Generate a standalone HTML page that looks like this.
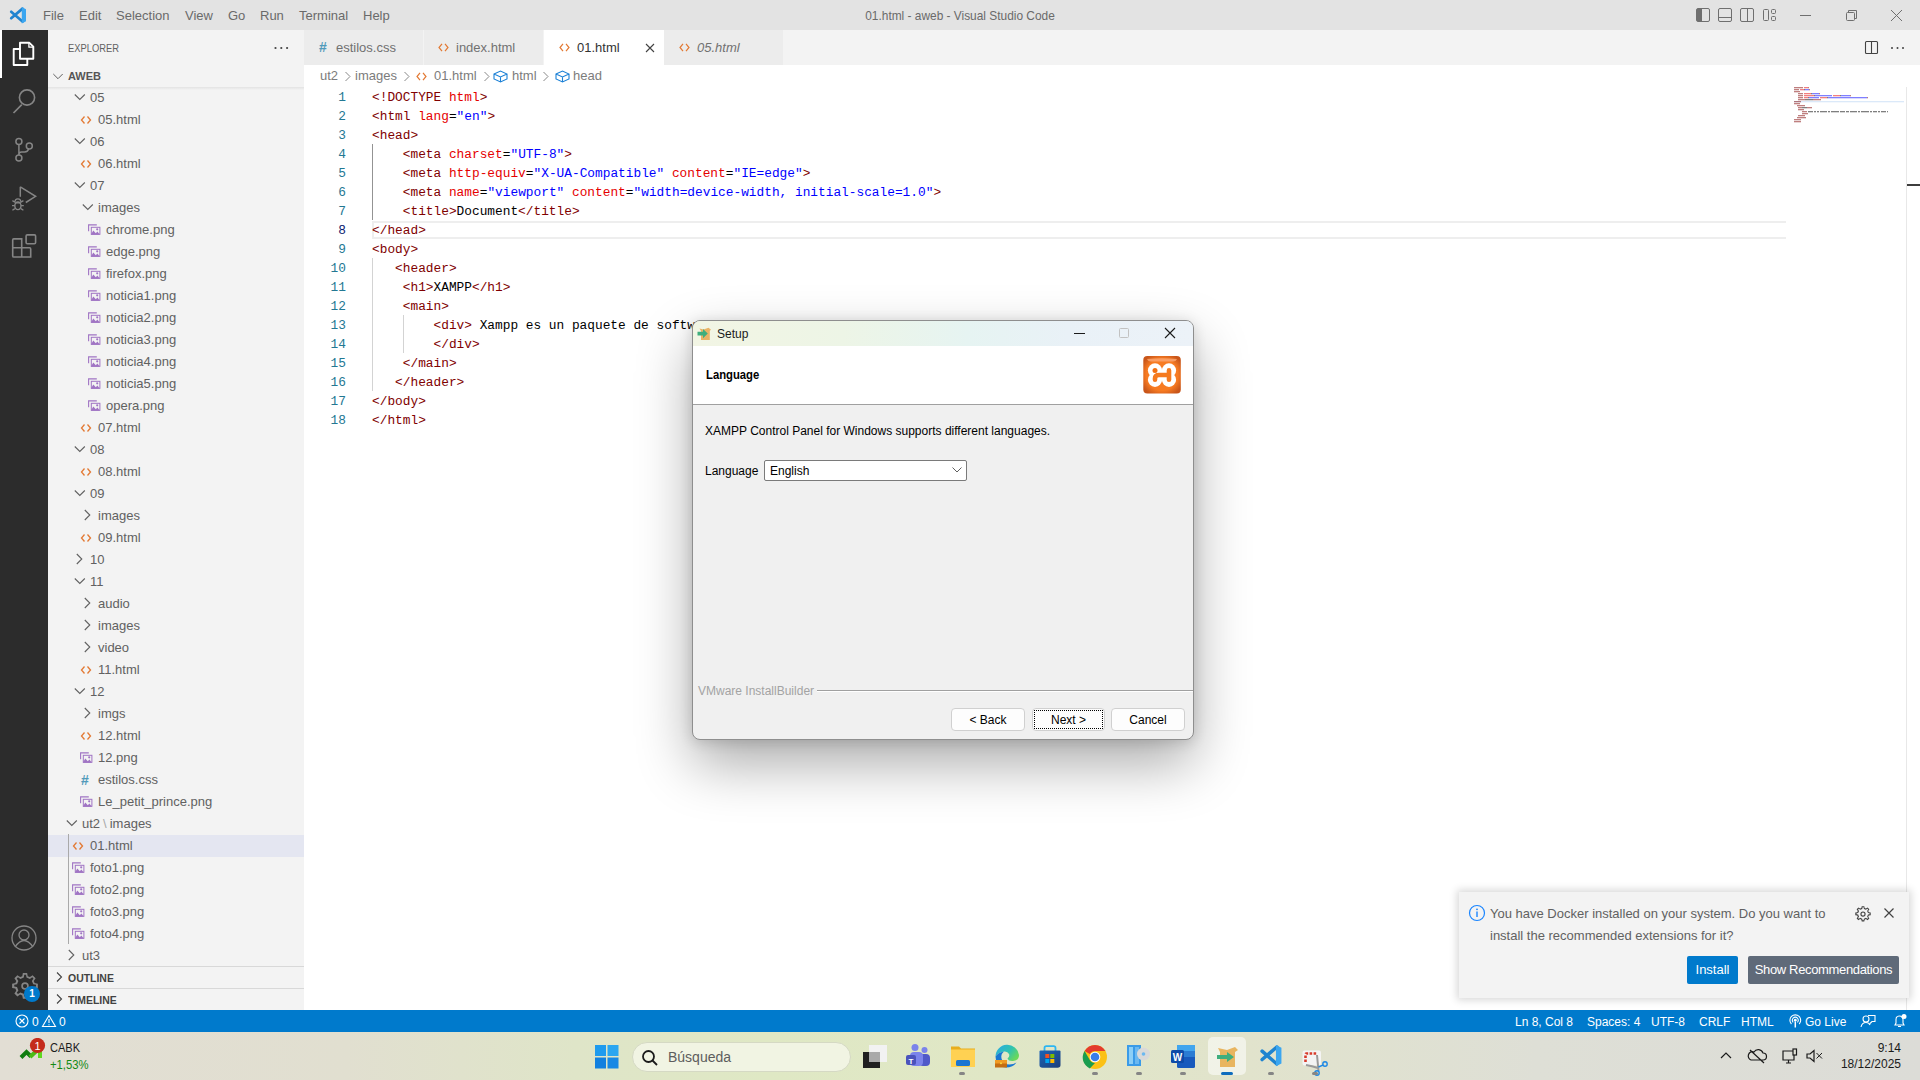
<!DOCTYPE html>
<html><head><meta charset="utf-8">
<style>
*{margin:0;padding:0;box-sizing:border-box}
html,body{width:1920px;height:1080px;overflow:hidden;background:#fff;font-family:"Liberation Sans",sans-serif;}
.a{position:absolute}
.t{position:absolute;white-space:pre}
#titlebar{left:0;top:0;width:1920px;height:30px;background:#e3e3e3}
.menu{top:1px;height:30px;line-height:30px;font-size:13px;color:#6a6a6a}
#actbar{left:0;top:30px;width:48px;height:980px;background:#2c2c2c}
#sidebar{left:48px;top:30px;width:256px;height:980px;background:#f3f3f3}
#tabs{left:304px;top:30px;width:1616px;height:35px;background:#f3f3f3}
.tab{top:0;height:35px;background:#ececec;border-right:1px solid #f3f3f3}
.tabtxt{top:0;height:35px;line-height:35px;font-size:13px;color:#717171}
#editor{left:304px;top:65px;width:1616px;height:945px;background:#fff}
#status{left:0;top:1010px;width:1920px;height:22px;background:#007acc}
.st{top:1011px;height:22px;line-height:22px;font-size:12px;color:#fff}
#taskbar{left:0;top:1032px;width:1920px;height:48px;background:linear-gradient(90deg,#e2ded4 0%,#e1dfd0 18%,#dfe5c8 30%,#dfe8c4 40%,#e0e7c6 52%,#e1e3cc 65%,#dedfd6 80%,#dcdcd7 100%)}
.row{height:22px;line-height:22px;font-size:13px;color:#616161}
.code{font-family:"Liberation Mono",monospace;font-size:12.82px;height:19px;line-height:19px;left:68px;color:#800000}
.ln{font-family:"Liberation Mono",monospace;font-size:12.82px;height:19px;line-height:19px;width:40px;left:2px;text-align:right;color:#237893}
.r{color:#e50000}.b{color:#0000ff}.k{color:#000}
</style></head><body>
<div id="titlebar" class="a">
<svg class="a" style="left:6px;top:4px" width="24" height="23" viewBox="0 0 24 23"><path d="M5.2 7.8 L16.5 17.6 M5.2 14.2 L16.5 4.6" stroke="#1f84d0" stroke-width="2.7" stroke-linecap="round" fill="none"/><path d="M15.8 3 L20 5.2 V17.2 L15.8 19.4 Z" fill="#3ba6f0"/></svg>
<div class="t menu" style="left:43px">File</div>
<div class="t menu" style="left:79px">Edit</div>
<div class="t menu" style="left:116px">Selection</div>
<div class="t menu" style="left:185px">View</div>
<div class="t menu" style="left:228px">Go</div>
<div class="t menu" style="left:260px">Run</div>
<div class="t menu" style="left:299px">Terminal</div>
<div class="t menu" style="left:363px">Help</div>
<div class="t menu" style="left:0;width:1920px;text-align:center;color:#6a6a6a;transform:scaleX(0.915);transform-origin:960px 0">01.html - aweb - Visual Studio Code</div>
<svg class="a" style="left:1690px;top:0" width="230" height="30">
<g fill="none" stroke="#6f6f6f" stroke-width="1">
<rect x="6.5" y="8.5" width="13" height="13" rx="1.5"/><rect x="7" y="9" width="5" height="12" fill="#6f6f6f" stroke="none"/>
<rect x="28.5" y="8.5" width="13" height="13" rx="1.5"/><line x1="28.5" y1="17.5" x2="41.5" y2="17.5"/>
<rect x="50.5" y="8.5" width="13" height="13" rx="1.5"/><line x1="57.5" y1="8.5" x2="57.5" y2="21.5"/>
<rect x="73.5" y="9.5" width="5" height="11" rx="1"/><rect x="81.5" y="9.5" width="4" height="4" rx="1"/><rect x="81.5" y="16.5" width="4" height="4" rx="1"/>
<line x1="110" y1="15.5" x2="121" y2="15.5"/>
<rect x="156.5" y="12.5" width="8" height="8" rx="1"/><path d="M158.5 12.5 V10.5 H166.5 V18.5 H164.5"/>
<path d="M201 10 L212 21 M212 10 L201 21"/>
</g></svg>
</div>
<div id="actbar" class="a">
<div class="a" style="left:0;top:0;width:2px;height:48px;background:#fff"></div>
<svg class="a" style="left:0;top:0" width="48" height="980" fill="none" stroke="#858585" stroke-width="1.3">
<g stroke="#fff" stroke-width="1.9" stroke-linejoin="round"><path d="M20 12.8 H29.4 L33.3 16.7 V28.8 H20 Z"/><path d="M28.9 13 V17.2 H33" stroke-width="1.3"/><path d="M20 19 H13.7 V35 H27.3 V28.8"/></g>
<circle cx="27" cy="67.5" r="7.6" stroke-width="1.6"/><path d="M13.5 83 L21.8 74.7" stroke-width="1.7"/>
<g stroke-width="1.5"><circle cx="18.9" cy="111.4" r="3"/><circle cx="18.9" cy="128.1" r="3"/><circle cx="29.3" cy="116" r="3"/><path d="M18.9 114.4 V125.1 M28.6 118.9 Q28 122 24.5 122 H21.5 Q18.9 122 18.9 124.5"/></g>
<path d="M20.3 156.8 L35.6 166.3 L25.8 172.5" stroke-width="1.5"/><path d="M20.3 156.8 V166.8" stroke-width="1.5"/><ellipse cx="17.9" cy="175.8" rx="3.1" ry="3.8" stroke-width="1.4"/><path d="M15 171.8 A2.9 2.9 0 0 1 20.8 171.8 M14.8 172.9 H21 M12.4 170.6 L14.9 172.2 M23.4 170.6 L20.9 172.2 M12 175.7 H14.7 M21.1 175.7 H23.8 M12.4 180.3 L14.9 178.6 M23.4 180.3 L20.9 178.6" stroke-width="1.3"/>
<path d="M12.7 217.8 V210 Q12.7 208.9 13.8 208.9 H21.7 V217.8 H29.6 Q30.7 217.8 30.7 218.9 V227 H13.8 Q12.7 227 12.7 225.9 V217.8 H21.7 V227" stroke-width="1.6"/><rect x="26.1" y="204.9" width="9.5" height="8.9" rx="1.2" stroke-width="1.6"/>
<circle cx="24" cy="908" r="12"/><circle cx="24" cy="905" r="5"/><path d="M15 917 Q24 904 33 917"/>
</svg>
<svg class="a" style="left:10px;top:941px" width="30" height="30" viewBox="0 0 24 24"><path fill="#858585" fill-rule="evenodd" d="M10.3 1.5h3.4l.5 2.6 1.7.7 2.2-1.5 2.4 2.4-1.5 2.2.7 1.7 2.6.5v3.4l-2.6.5-.7 1.7 1.5 2.2-2.4 2.4-2.2-1.5-1.7.7-.5 2.6h-3.4l-.5-2.6-1.7-.7-2.2 1.5-2.4-2.4 1.5-2.2-.7-1.7-2.6-.5v-3.4l2.6-.5.7-1.7-1.5-2.2 2.4-2.4 2.2 1.5 1.7-.7zM12 9a3 3 0 100 6 3 3 0 000-6zM11.4 3 l-.4 2.2-2.7 1.1-1.9-1.3-1 1 1.3 1.9-1.1 2.7-2.2.4v1.4l2.2.4 1.1 2.7-1.3 1.9 1 1 1.9-1.3 2.7 1.1.4 2.2h1.4l.4-2.2 2.7-1.1 1.9 1.3 1-1-1.3-1.9 1.1-2.7 2.2-.4v-1.4l-2.2-.4-1.1-2.7 1.3-1.9-1-1-1.9 1.3-2.7-1.1-.4-2.2zM12 10.3a1.7 1.7 0 110 3.4 1.7 1.7 0 010-3.4z"/></svg>
<div class="a" style="left:24px;top:956px;width:16px;height:16px;border-radius:8px;background:#007acc;color:#fff;font-size:10px;font-weight:bold;line-height:16px;text-align:center">1</div>
</div>
<div id="sidebar" class="a">
<div class="t" style="left:20px;top:1px;height:35px;line-height:35px;font-size:11px;color:#616161;transform:scaleX(0.85);transform-origin:0 0">EXPLORER</div>
<svg class="a" style="left:224px;top:15px" width="20" height="6"><circle cx="3.5" cy="3" r="1.1" fill="#424242"/><circle cx="9.3" cy="3" r="1.1" fill="#424242"/><circle cx="15.1" cy="3" r="1.1" fill="#424242"/></svg>
<svg class="a" style="left:4px;top:38px" width="16" height="16"><path d="M1.3 6 L6 10.7 L10.7 6" fill="none" stroke="#616161" stroke-width="1"/></svg>
<div class="t" style="left:20px;top:35px;height:22px;line-height:22px;font-size:11px;font-weight:bold;color:#555">AWEB</div>
<div class="a" style="left:0;top:57px;width:256px;height:3px;background:linear-gradient(#e2e2e2,rgba(243,243,243,0))"></div>
<svg class="a" style="left:26px;top:60px" width="16" height="16"><path d="M0.8 4.5 L5.8 9.5 L10.8 4.5" fill="none" stroke="#616161" stroke-width="1.1"/></svg>
<div class="t row" style="left:42px;top:57px">05</div>
<svg class="a" style="left:32px;top:84px" width="12" height="12"><path d="M4.5 2.5 L1.5 6 L4.5 9.5 M7.5 2.5 L10.5 6 L7.5 9.5" fill="none" stroke="#e37933" stroke-width="1.3"/></svg>
<div class="t row" style="left:50px;top:79px">05.html</div>
<svg class="a" style="left:26px;top:104px" width="16" height="16"><path d="M0.8 4.5 L5.8 9.5 L10.8 4.5" fill="none" stroke="#616161" stroke-width="1.1"/></svg>
<div class="t row" style="left:42px;top:101px">06</div>
<svg class="a" style="left:32px;top:128px" width="12" height="12"><path d="M4.5 2.5 L1.5 6 L4.5 9.5 M7.5 2.5 L10.5 6 L7.5 9.5" fill="none" stroke="#e37933" stroke-width="1.3"/></svg>
<div class="t row" style="left:50px;top:123px">06.html</div>
<svg class="a" style="left:26px;top:148px" width="16" height="16"><path d="M0.8 4.5 L5.8 9.5 L10.8 4.5" fill="none" stroke="#616161" stroke-width="1.1"/></svg>
<div class="t row" style="left:42px;top:145px">07</div>
<svg class="a" style="left:34px;top:170px" width="16" height="16"><path d="M0.8 4.5 L5.8 9.5 L10.8 4.5" fill="none" stroke="#616161" stroke-width="1.1"/></svg>
<div class="t row" style="left:50px;top:167px">images</div>
<svg class="a" style="left:40px;top:194px" width="13" height="12"><path d="M0.6 7.2 V0.9 H8.8" stroke="#a074c4" stroke-width="1.1" fill="none"/><rect x="3.3" y="3.3" width="8.6" height="7" fill="none" stroke="#a074c4" stroke-width="1"/><path d="M2.8 10.8 L5.3 6.6 L7.8 9.2 L9.4 7.6 L11.9 10.8 Z" fill="#a074c4"/><circle cx="9.2" cy="5.3" r="1.1" fill="#a074c4"/></svg>
<div class="t row" style="left:58px;top:189px">chrome.png</div>
<svg class="a" style="left:40px;top:216px" width="13" height="12"><path d="M0.6 7.2 V0.9 H8.8" stroke="#a074c4" stroke-width="1.1" fill="none"/><rect x="3.3" y="3.3" width="8.6" height="7" fill="none" stroke="#a074c4" stroke-width="1"/><path d="M2.8 10.8 L5.3 6.6 L7.8 9.2 L9.4 7.6 L11.9 10.8 Z" fill="#a074c4"/><circle cx="9.2" cy="5.3" r="1.1" fill="#a074c4"/></svg>
<div class="t row" style="left:58px;top:211px">edge.png</div>
<svg class="a" style="left:40px;top:238px" width="13" height="12"><path d="M0.6 7.2 V0.9 H8.8" stroke="#a074c4" stroke-width="1.1" fill="none"/><rect x="3.3" y="3.3" width="8.6" height="7" fill="none" stroke="#a074c4" stroke-width="1"/><path d="M2.8 10.8 L5.3 6.6 L7.8 9.2 L9.4 7.6 L11.9 10.8 Z" fill="#a074c4"/><circle cx="9.2" cy="5.3" r="1.1" fill="#a074c4"/></svg>
<div class="t row" style="left:58px;top:233px">firefox.png</div>
<svg class="a" style="left:40px;top:260px" width="13" height="12"><path d="M0.6 7.2 V0.9 H8.8" stroke="#a074c4" stroke-width="1.1" fill="none"/><rect x="3.3" y="3.3" width="8.6" height="7" fill="none" stroke="#a074c4" stroke-width="1"/><path d="M2.8 10.8 L5.3 6.6 L7.8 9.2 L9.4 7.6 L11.9 10.8 Z" fill="#a074c4"/><circle cx="9.2" cy="5.3" r="1.1" fill="#a074c4"/></svg>
<div class="t row" style="left:58px;top:255px">noticia1.png</div>
<svg class="a" style="left:40px;top:282px" width="13" height="12"><path d="M0.6 7.2 V0.9 H8.8" stroke="#a074c4" stroke-width="1.1" fill="none"/><rect x="3.3" y="3.3" width="8.6" height="7" fill="none" stroke="#a074c4" stroke-width="1"/><path d="M2.8 10.8 L5.3 6.6 L7.8 9.2 L9.4 7.6 L11.9 10.8 Z" fill="#a074c4"/><circle cx="9.2" cy="5.3" r="1.1" fill="#a074c4"/></svg>
<div class="t row" style="left:58px;top:277px">noticia2.png</div>
<svg class="a" style="left:40px;top:304px" width="13" height="12"><path d="M0.6 7.2 V0.9 H8.8" stroke="#a074c4" stroke-width="1.1" fill="none"/><rect x="3.3" y="3.3" width="8.6" height="7" fill="none" stroke="#a074c4" stroke-width="1"/><path d="M2.8 10.8 L5.3 6.6 L7.8 9.2 L9.4 7.6 L11.9 10.8 Z" fill="#a074c4"/><circle cx="9.2" cy="5.3" r="1.1" fill="#a074c4"/></svg>
<div class="t row" style="left:58px;top:299px">noticia3.png</div>
<svg class="a" style="left:40px;top:326px" width="13" height="12"><path d="M0.6 7.2 V0.9 H8.8" stroke="#a074c4" stroke-width="1.1" fill="none"/><rect x="3.3" y="3.3" width="8.6" height="7" fill="none" stroke="#a074c4" stroke-width="1"/><path d="M2.8 10.8 L5.3 6.6 L7.8 9.2 L9.4 7.6 L11.9 10.8 Z" fill="#a074c4"/><circle cx="9.2" cy="5.3" r="1.1" fill="#a074c4"/></svg>
<div class="t row" style="left:58px;top:321px">noticia4.png</div>
<svg class="a" style="left:40px;top:348px" width="13" height="12"><path d="M0.6 7.2 V0.9 H8.8" stroke="#a074c4" stroke-width="1.1" fill="none"/><rect x="3.3" y="3.3" width="8.6" height="7" fill="none" stroke="#a074c4" stroke-width="1"/><path d="M2.8 10.8 L5.3 6.6 L7.8 9.2 L9.4 7.6 L11.9 10.8 Z" fill="#a074c4"/><circle cx="9.2" cy="5.3" r="1.1" fill="#a074c4"/></svg>
<div class="t row" style="left:58px;top:343px">noticia5.png</div>
<svg class="a" style="left:40px;top:370px" width="13" height="12"><path d="M0.6 7.2 V0.9 H8.8" stroke="#a074c4" stroke-width="1.1" fill="none"/><rect x="3.3" y="3.3" width="8.6" height="7" fill="none" stroke="#a074c4" stroke-width="1"/><path d="M2.8 10.8 L5.3 6.6 L7.8 9.2 L9.4 7.6 L11.9 10.8 Z" fill="#a074c4"/><circle cx="9.2" cy="5.3" r="1.1" fill="#a074c4"/></svg>
<div class="t row" style="left:58px;top:365px">opera.png</div>
<svg class="a" style="left:32px;top:392px" width="12" height="12"><path d="M4.5 2.5 L1.5 6 L4.5 9.5 M7.5 2.5 L10.5 6 L7.5 9.5" fill="none" stroke="#e37933" stroke-width="1.3"/></svg>
<div class="t row" style="left:50px;top:387px">07.html</div>
<svg class="a" style="left:26px;top:412px" width="16" height="16"><path d="M0.8 4.5 L5.8 9.5 L10.8 4.5" fill="none" stroke="#616161" stroke-width="1.1"/></svg>
<div class="t row" style="left:42px;top:409px">08</div>
<svg class="a" style="left:32px;top:436px" width="12" height="12"><path d="M4.5 2.5 L1.5 6 L4.5 9.5 M7.5 2.5 L10.5 6 L7.5 9.5" fill="none" stroke="#e37933" stroke-width="1.3"/></svg>
<div class="t row" style="left:50px;top:431px">08.html</div>
<svg class="a" style="left:26px;top:456px" width="16" height="16"><path d="M0.8 4.5 L5.8 9.5 L10.8 4.5" fill="none" stroke="#616161" stroke-width="1.1"/></svg>
<div class="t row" style="left:42px;top:453px">09</div>
<svg class="a" style="left:34px;top:478px" width="16" height="16"><path d="M2.8 2 L7.8 7 L2.8 12" fill="none" stroke="#616161" stroke-width="1.1"/></svg>
<div class="t row" style="left:50px;top:475px">images</div>
<svg class="a" style="left:32px;top:502px" width="12" height="12"><path d="M4.5 2.5 L1.5 6 L4.5 9.5 M7.5 2.5 L10.5 6 L7.5 9.5" fill="none" stroke="#e37933" stroke-width="1.3"/></svg>
<div class="t row" style="left:50px;top:497px">09.html</div>
<svg class="a" style="left:26px;top:522px" width="16" height="16"><path d="M2.8 2 L7.8 7 L2.8 12" fill="none" stroke="#616161" stroke-width="1.1"/></svg>
<div class="t row" style="left:42px;top:519px">10</div>
<svg class="a" style="left:26px;top:544px" width="16" height="16"><path d="M0.8 4.5 L5.8 9.5 L10.8 4.5" fill="none" stroke="#616161" stroke-width="1.1"/></svg>
<div class="t row" style="left:42px;top:541px">11</div>
<svg class="a" style="left:34px;top:566px" width="16" height="16"><path d="M2.8 2 L7.8 7 L2.8 12" fill="none" stroke="#616161" stroke-width="1.1"/></svg>
<div class="t row" style="left:50px;top:563px">audio</div>
<svg class="a" style="left:34px;top:588px" width="16" height="16"><path d="M2.8 2 L7.8 7 L2.8 12" fill="none" stroke="#616161" stroke-width="1.1"/></svg>
<div class="t row" style="left:50px;top:585px">images</div>
<svg class="a" style="left:34px;top:610px" width="16" height="16"><path d="M2.8 2 L7.8 7 L2.8 12" fill="none" stroke="#616161" stroke-width="1.1"/></svg>
<div class="t row" style="left:50px;top:607px">video</div>
<svg class="a" style="left:32px;top:634px" width="12" height="12"><path d="M4.5 2.5 L1.5 6 L4.5 9.5 M7.5 2.5 L10.5 6 L7.5 9.5" fill="none" stroke="#e37933" stroke-width="1.3"/></svg>
<div class="t row" style="left:50px;top:629px">11.html</div>
<svg class="a" style="left:26px;top:654px" width="16" height="16"><path d="M0.8 4.5 L5.8 9.5 L10.8 4.5" fill="none" stroke="#616161" stroke-width="1.1"/></svg>
<div class="t row" style="left:42px;top:651px">12</div>
<svg class="a" style="left:34px;top:676px" width="16" height="16"><path d="M2.8 2 L7.8 7 L2.8 12" fill="none" stroke="#616161" stroke-width="1.1"/></svg>
<div class="t row" style="left:50px;top:673px">imgs</div>
<svg class="a" style="left:32px;top:700px" width="12" height="12"><path d="M4.5 2.5 L1.5 6 L4.5 9.5 M7.5 2.5 L10.5 6 L7.5 9.5" fill="none" stroke="#e37933" stroke-width="1.3"/></svg>
<div class="t row" style="left:50px;top:695px">12.html</div>
<svg class="a" style="left:32px;top:722px" width="13" height="12"><path d="M0.6 7.2 V0.9 H8.8" stroke="#a074c4" stroke-width="1.1" fill="none"/><rect x="3.3" y="3.3" width="8.6" height="7" fill="none" stroke="#a074c4" stroke-width="1"/><path d="M2.8 10.8 L5.3 6.6 L7.8 9.2 L9.4 7.6 L11.9 10.8 Z" fill="#a074c4"/><circle cx="9.2" cy="5.3" r="1.1" fill="#a074c4"/></svg>
<div class="t row" style="left:50px;top:717px">12.png</div>
<div class="t" style="left:33px;top:739px;height:22px;line-height:22px;font-size:14px;font-weight:bold;color:#519aba">#</div>
<div class="t row" style="left:50px;top:739px">estilos.css</div>
<svg class="a" style="left:32px;top:766px" width="13" height="12"><path d="M0.6 7.2 V0.9 H8.8" stroke="#a074c4" stroke-width="1.1" fill="none"/><rect x="3.3" y="3.3" width="8.6" height="7" fill="none" stroke="#a074c4" stroke-width="1"/><path d="M2.8 10.8 L5.3 6.6 L7.8 9.2 L9.4 7.6 L11.9 10.8 Z" fill="#a074c4"/><circle cx="9.2" cy="5.3" r="1.1" fill="#a074c4"/></svg>
<div class="t row" style="left:50px;top:761px">Le_petit_prince.png</div>
<svg class="a" style="left:18px;top:786px" width="16" height="16"><path d="M0.8 4.5 L5.8 9.5 L10.8 4.5" fill="none" stroke="#616161" stroke-width="1.1"/></svg>
<div class="t row" style="left:34px;top:783px">ut2<span style="color:#a8a8a8;padding:0 3px">\</span>images</div>
<div class="a" style="left:0;top:805px;width:256px;height:22px;background:#e4e6f1"></div>
<svg class="a" style="left:24px;top:810px" width="12" height="12"><path d="M4.5 2.5 L1.5 6 L4.5 9.5 M7.5 2.5 L10.5 6 L7.5 9.5" fill="none" stroke="#e37933" stroke-width="1.3"/></svg>
<div class="t row" style="left:42px;top:805px">01.html</div>
<svg class="a" style="left:24px;top:832px" width="13" height="12"><path d="M0.6 7.2 V0.9 H8.8" stroke="#a074c4" stroke-width="1.1" fill="none"/><rect x="3.3" y="3.3" width="8.6" height="7" fill="none" stroke="#a074c4" stroke-width="1"/><path d="M2.8 10.8 L5.3 6.6 L7.8 9.2 L9.4 7.6 L11.9 10.8 Z" fill="#a074c4"/><circle cx="9.2" cy="5.3" r="1.1" fill="#a074c4"/></svg>
<div class="t row" style="left:42px;top:827px">foto1.png</div>
<svg class="a" style="left:24px;top:854px" width="13" height="12"><path d="M0.6 7.2 V0.9 H8.8" stroke="#a074c4" stroke-width="1.1" fill="none"/><rect x="3.3" y="3.3" width="8.6" height="7" fill="none" stroke="#a074c4" stroke-width="1"/><path d="M2.8 10.8 L5.3 6.6 L7.8 9.2 L9.4 7.6 L11.9 10.8 Z" fill="#a074c4"/><circle cx="9.2" cy="5.3" r="1.1" fill="#a074c4"/></svg>
<div class="t row" style="left:42px;top:849px">foto2.png</div>
<svg class="a" style="left:24px;top:876px" width="13" height="12"><path d="M0.6 7.2 V0.9 H8.8" stroke="#a074c4" stroke-width="1.1" fill="none"/><rect x="3.3" y="3.3" width="8.6" height="7" fill="none" stroke="#a074c4" stroke-width="1"/><path d="M2.8 10.8 L5.3 6.6 L7.8 9.2 L9.4 7.6 L11.9 10.8 Z" fill="#a074c4"/><circle cx="9.2" cy="5.3" r="1.1" fill="#a074c4"/></svg>
<div class="t row" style="left:42px;top:871px">foto3.png</div>
<svg class="a" style="left:24px;top:898px" width="13" height="12"><path d="M0.6 7.2 V0.9 H8.8" stroke="#a074c4" stroke-width="1.1" fill="none"/><rect x="3.3" y="3.3" width="8.6" height="7" fill="none" stroke="#a074c4" stroke-width="1"/><path d="M2.8 10.8 L5.3 6.6 L7.8 9.2 L9.4 7.6 L11.9 10.8 Z" fill="#a074c4"/><circle cx="9.2" cy="5.3" r="1.1" fill="#a074c4"/></svg>
<div class="t row" style="left:42px;top:893px">foto4.png</div>
<svg class="a" style="left:18px;top:918px" width="16" height="16"><path d="M2.8 2 L7.8 7 L2.8 12" fill="none" stroke="#616161" stroke-width="1.1"/></svg>
<div class="t row" style="left:34px;top:915px">ut3</div>
<div class="a" style="left:20px;top:804px;width:1px;height:110px;background:#a9a9a9"></div>
<div class="a" style="left:0;top:936px;width:256px;height:1px;background:#d8d8d8"></div>
<svg class="a" style="left:4px;top:939px" width="16" height="16"><path d="M5 3.5 L9.5 8 L5 12.5" fill="none" stroke="#424242" stroke-width="1.1"/></svg>
<div class="t" style="left:20px;top:937px;height:22px;line-height:22px;font-size:11px;font-weight:bold;color:#424242;transform:scaleX(0.95);transform-origin:0 0">OUTLINE</div>
<div class="a" style="left:0;top:958px;width:256px;height:1px;background:#d8d8d8"></div>
<svg class="a" style="left:4px;top:961px" width="16" height="16"><path d="M5 3.5 L9.5 8 L5 12.5" fill="none" stroke="#424242" stroke-width="1.1"/></svg>
<div class="t" style="left:20px;top:959px;height:22px;line-height:22px;font-size:11px;font-weight:bold;color:#424242;transform:scaleX(0.95);transform-origin:0 0">TIMELINE</div>
</div>
<div id="tabs" class="a">
<div class="a tab" style="left:0;width:120px"></div>
<div class="a" style="left:15px;top:0;height:35px;line-height:35px;font-size:14px;font-weight:bold;color:#519aba">#</div>
<div class="t tabtxt" style="left:32px">estilos.css</div>
<div class="a tab" style="left:120px;width:120px"></div>
<svg class="a" style="left:134px;top:13px" width="11" height="9"><path d="M4 0.8 L1 4.5 L4 8.2 M7 0.8 L10 4.5 L7 8.2" fill="none" stroke="#e37933" stroke-width="1.2"/></svg>
<div class="t tabtxt" style="left:152px">index.html</div>
<div class="a" style="left:240px;top:0;width:120px;height:35px;background:#fff"></div>
<svg class="a" style="left:255px;top:13px" width="11" height="9"><path d="M4 0.8 L1 4.5 L4 8.2 M7 0.8 L10 4.5 L7 8.2" fill="none" stroke="#e37933" stroke-width="1.2"/></svg>
<div class="t tabtxt" style="left:273px;color:#333">01.html</div>
<svg class="a" style="left:341px;top:13px" width="10" height="10"><path d="M1 1 L9 9 M9 1 L1 9" stroke="#424242" stroke-width="1.1"/></svg>
<div class="a tab" style="left:360px;width:120px"></div>
<svg class="a" style="left:375px;top:13px" width="11" height="9"><path d="M4 0.8 L1 4.5 L4 8.2 M7 0.8 L10 4.5 L7 8.2" fill="none" stroke="#e37933" stroke-width="1.2"/></svg>
<div class="t tabtxt" style="left:393px;font-style:italic">05.html</div>
<svg class="a" style="left:1558px;top:8px" width="60" height="20" fill="none" stroke="#424242" stroke-width="1.1">
<rect x="3.5" y="3.5" width="12" height="12" rx="1"/><line x1="9.5" y1="3.5" x2="9.5" y2="15.5"/>
<circle cx="30" cy="10" r="1" fill="#424242" stroke="none"/><circle cx="35.5" cy="10" r="1" fill="#424242" stroke="none"/><circle cx="41" cy="10" r="1" fill="#424242" stroke="none"/>
</svg>
</div>
<div id="editor" class="a">
<div class="t" style="left:16px;top:0;height:22px;line-height:22px;font-size:13px;color:#7c7c7c">ut2</div>
<svg class="a" style="left:40px;top:6px" width="8" height="11"><path d="M1.5 1 L6 5.5 L1.5 10" fill="none" stroke="#888" stroke-width="1"/></svg>
<div class="t" style="left:51px;top:0;height:22px;line-height:22px;font-size:13px;color:#7c7c7c">images</div>
<svg class="a" style="left:99px;top:6px" width="8" height="11"><path d="M1.5 1 L6 5.5 L1.5 10" fill="none" stroke="#888" stroke-width="1"/></svg>
<svg class="a" style="left:112px;top:7px" width="11" height="9"><path d="M4 0.8 L1 4.5 L4 8.2 M7 0.8 L10 4.5 L7 8.2" fill="none" stroke="#e37933" stroke-width="1.2"/></svg>
<div class="t" style="left:130px;top:0;height:22px;line-height:22px;font-size:13px;color:#7c7c7c">01.html</div>
<svg class="a" style="left:179px;top:6px" width="8" height="11"><path d="M1.5 1 L6 5.5 L1.5 10" fill="none" stroke="#888" stroke-width="1"/></svg>
<svg class="a" style="left:189px;top:5px" width="15" height="13"><path d="M1 4 L7.5 1 L14 4 V9 L7.5 12 L1 9 Z M1 4 L7.5 7 L14 4 M7.5 7 V12" fill="none" stroke="#1b80d6" stroke-width="1.1"/></svg>
<div class="t" style="left:208px;top:0;height:22px;line-height:22px;font-size:13px;color:#7c7c7c">html</div>
<svg class="a" style="left:238px;top:6px" width="8" height="11"><path d="M1.5 1 L6 5.5 L1.5 10" fill="none" stroke="#888" stroke-width="1"/></svg>
<svg class="a" style="left:251px;top:5px" width="15" height="13"><path d="M1 4 L7.5 1 L14 4 V9 L7.5 12 L1 9 Z M1 4 L7.5 7 L14 4 M7.5 7 V12" fill="none" stroke="#1b80d6" stroke-width="1.1"/></svg>
<div class="t" style="left:269px;top:0;height:22px;line-height:22px;font-size:13px;color:#7c7c7c">head</div>

<div class="a" style="left:68px;top:79px;width:1px;height:76px;background:#939393"></div>
<div class="a" style="left:68px;top:156px;width:1414px;height:18px;border:2px solid #eeeeee;border-right:none"></div>
<div class="a" style="left:68px;top:193px;width:1px;height:133px;background:#d3d3d3"></div>
<div class="a" style="left:99px;top:250px;width:1px;height:38px;background:#d3d3d3"></div>
<svg class="a" style="left:1490px;top:22px" width="110" height="40"><rect x="-4" y="14" width="116" height="1.3" fill="#dbe9f9"/><rect x="0" y="0" width="9" height="1.3" fill="#800000" opacity="0.5"/><rect x="10" y="0" width="4" height="1.3" fill="#e50000" opacity="0.5"/><rect x="14" y="0" width="1" height="1.3" fill="#800000" opacity="0.5"/><rect x="0" y="2" width="5" height="1.3" fill="#800000" opacity="0.5"/><rect x="6" y="2" width="4" height="1.3" fill="#e50000" opacity="0.5"/><rect x="10" y="2" width="1" height="1.3" fill="#000" opacity="0.5"/><rect x="11" y="2" width="4" height="1.3" fill="#0000ff" opacity="0.5"/><rect x="15" y="2" width="1" height="1.3" fill="#800000" opacity="0.5"/><rect x="0" y="4" width="6" height="1.3" fill="#800000" opacity="0.5"/><rect x="4" y="6" width="5" height="1.3" fill="#800000" opacity="0.5"/><rect x="10" y="6" width="7" height="1.3" fill="#e50000" opacity="0.5"/><rect x="17" y="6" width="1" height="1.3" fill="#000" opacity="0.5"/><rect x="18" y="6" width="7" height="1.3" fill="#0000ff" opacity="0.5"/><rect x="25" y="6" width="1" height="1.3" fill="#800000" opacity="0.5"/><rect x="4" y="8" width="5" height="1.3" fill="#800000" opacity="0.5"/><rect x="10" y="8" width="10" height="1.3" fill="#e50000" opacity="0.5"/><rect x="20" y="8" width="1" height="1.3" fill="#000" opacity="0.5"/><rect x="21" y="8" width="17" height="1.3" fill="#0000ff" opacity="0.5"/><rect x="39" y="8" width="7" height="1.3" fill="#e50000" opacity="0.5"/><rect x="46" y="8" width="1" height="1.3" fill="#000" opacity="0.5"/><rect x="47" y="8" width="9" height="1.3" fill="#0000ff" opacity="0.5"/><rect x="56" y="8" width="1" height="1.3" fill="#800000" opacity="0.5"/><rect x="4" y="10" width="5" height="1.3" fill="#800000" opacity="0.5"/><rect x="10" y="10" width="4" height="1.3" fill="#e50000" opacity="0.5"/><rect x="14" y="10" width="1" height="1.3" fill="#000" opacity="0.5"/><rect x="15" y="10" width="10" height="1.3" fill="#0000ff" opacity="0.5"/><rect x="26" y="10" width="7" height="1.3" fill="#e50000" opacity="0.5"/><rect x="33" y="10" width="1" height="1.3" fill="#000" opacity="0.5"/><rect x="34" y="10" width="39" height="1.3" fill="#0000ff" opacity="0.5"/><rect x="73" y="10" width="1" height="1.3" fill="#800000" opacity="0.5"/><rect x="4" y="12" width="7" height="1.3" fill="#800000" opacity="0.5"/><rect x="11" y="12" width="8" height="1.3" fill="#000" opacity="0.5"/><rect x="19" y="12" width="8" height="1.3" fill="#800000" opacity="0.5"/><rect x="0" y="14" width="7" height="1.3" fill="#800000" opacity="0.5"/><rect x="0" y="16" width="6" height="1.3" fill="#800000" opacity="0.5"/><rect x="3" y="18" width="8" height="1.3" fill="#800000" opacity="0.5"/><rect x="4" y="20" width="4" height="1.3" fill="#800000" opacity="0.5"/><rect x="8" y="20" width="5" height="1.3" fill="#000" opacity="0.5"/><rect x="13" y="20" width="5" height="1.3" fill="#800000" opacity="0.5"/><rect x="4" y="22" width="6" height="1.3" fill="#800000" opacity="0.5"/><rect x="8" y="24" width="5" height="1.3" fill="#800000" opacity="0.5"/><rect x="14" y="24" width="5" height="1.3" fill="#000" opacity="0.5"/><rect x="20" y="24" width="2" height="1.3" fill="#000" opacity="0.5"/><rect x="23" y="24" width="2" height="1.3" fill="#000" opacity="0.5"/><rect x="26" y="24" width="7" height="1.3" fill="#000" opacity="0.5"/><rect x="34" y="24" width="2" height="1.3" fill="#000" opacity="0.5"/><rect x="37" y="24" width="8" height="1.3" fill="#000" opacity="0.5"/><rect x="46" y="24" width="5" height="1.3" fill="#000" opacity="0.5"/><rect x="52" y="24" width="3" height="1.3" fill="#000" opacity="0.5"/><rect x="56" y="24" width="7" height="1.3" fill="#000" opacity="0.5"/><rect x="64" y="24" width="2" height="1.3" fill="#000" opacity="0.5"/><rect x="67" y="24" width="8" height="1.3" fill="#000" opacity="0.5"/><rect x="76" y="24" width="2" height="1.3" fill="#000" opacity="0.5"/><rect x="79" y="24" width="4" height="1.3" fill="#000" opacity="0.5"/><rect x="84" y="24" width="2" height="1.3" fill="#000" opacity="0.5"/><rect x="87" y="24" width="5" height="1.3" fill="#000" opacity="0.5"/><rect x="93" y="24" width="1" height="1.3" fill="#000" opacity="0.5"/><rect x="8" y="26" width="6" height="1.3" fill="#800000" opacity="0.5"/><rect x="4" y="28" width="7" height="1.3" fill="#800000" opacity="0.5"/><rect x="3" y="30" width="9" height="1.3" fill="#800000" opacity="0.5"/><rect x="0" y="32" width="7" height="1.3" fill="#800000" opacity="0.5"/><rect x="0" y="34" width="7" height="1.3" fill="#800000" opacity="0.5"/></svg>
<div class="a" style="left:1602px;top:22px;width:1px;height:923px;background:#e8e8e8"></div>
<div class="a" style="left:1603px;top:119px;width:13px;height:2px;background:#3d3d3d"></div>
<div class="t code" style="top:23px">&lt;!DOCTYPE <span class="r">html</span>&gt;</div>
<div class="t ln" style="top:23px;color:#237893">1</div>
<div class="t code" style="top:42px">&lt;html <span class="r">lang</span><span class="k">=</span><span class="b">&quot;en&quot;</span>&gt;</div>
<div class="t ln" style="top:42px;color:#237893">2</div>
<div class="t code" style="top:61px">&lt;head&gt;</div>
<div class="t ln" style="top:61px;color:#237893">3</div>
<div class="t code" style="top:80px"><span class="k">    </span>&lt;meta <span class="r">charset</span><span class="k">=</span><span class="b">&quot;UTF-8&quot;</span>&gt;</div>
<div class="t ln" style="top:80px;color:#237893">4</div>
<div class="t code" style="top:99px"><span class="k">    </span>&lt;meta <span class="r">http-equiv</span><span class="k">=</span><span class="b">&quot;X-UA-Compatible&quot;</span><span class="k"> </span><span class="r">content</span><span class="k">=</span><span class="b">&quot;IE=edge&quot;</span>&gt;</div>
<div class="t ln" style="top:99px;color:#237893">5</div>
<div class="t code" style="top:118px"><span class="k">    </span>&lt;meta <span class="r">name</span><span class="k">=</span><span class="b">&quot;viewport&quot;</span><span class="k"> </span><span class="r">content</span><span class="k">=</span><span class="b">&quot;width=device-width, initial-scale=1.0&quot;</span>&gt;</div>
<div class="t ln" style="top:118px;color:#237893">6</div>
<div class="t code" style="top:137px"><span class="k">    </span>&lt;title&gt;<span class="k">Document</span>&lt;/title&gt;</div>
<div class="t ln" style="top:137px;color:#237893">7</div>
<div class="t code" style="top:156px">&lt;/head&gt;</div>
<div class="t ln" style="top:156px;color:#0b216f">8</div>
<div class="t code" style="top:175px">&lt;body&gt;</div>
<div class="t ln" style="top:175px;color:#237893">9</div>
<div class="t code" style="top:194px"><span class="k">   </span>&lt;header&gt;</div>
<div class="t ln" style="top:194px;color:#237893">10</div>
<div class="t code" style="top:213px"><span class="k">    </span>&lt;h1&gt;<span class="k">XAMPP</span>&lt;/h1&gt;</div>
<div class="t ln" style="top:213px;color:#237893">11</div>
<div class="t code" style="top:232px"><span class="k">    </span>&lt;main&gt;</div>
<div class="t ln" style="top:232px;color:#237893">12</div>
<div class="t code" style="top:251px"><span class="k">        </span>&lt;div&gt;<span class="k"> Xampp es un paquete de software libre que instala un servidor de base de datos M</span></div>
<div class="t ln" style="top:251px;color:#237893">13</div>
<div class="t code" style="top:270px"><span class="k">        </span>&lt;/div&gt;</div>
<div class="t ln" style="top:270px;color:#237893">14</div>
<div class="t code" style="top:289px"><span class="k">    </span>&lt;/main&gt;</div>
<div class="t ln" style="top:289px;color:#237893">15</div>
<div class="t code" style="top:308px"><span class="k">   </span>&lt;/header&gt;</div>
<div class="t ln" style="top:308px;color:#237893">16</div>
<div class="t code" style="top:327px">&lt;/body&gt;</div>
<div class="t ln" style="top:327px;color:#237893">17</div>
<div class="t code" style="top:346px">&lt;/html&gt;</div>
<div class="t ln" style="top:346px;color:#237893">18</div>
</div>
<div id="status" class="a">
<svg class="a" style="left:15px;top:4px" width="60" height="14" fill="none" stroke="#fff" stroke-width="1.1">
<circle cx="7" cy="7" r="6"/><path d="M4.5 4.5 L9.5 9.5 M9.5 4.5 L4.5 9.5"/>
<path d="M34 1.5 L40.5 12.5 H27.5 Z M34 5 V9 M34 10.3 V11.2"/>
</svg>
<div class="t" style="left:32px;top:1px;height:22px;line-height:22px;font-size:12px;color:#fff">0</div>
<div class="t" style="left:59px;top:1px;height:22px;line-height:22px;font-size:12px;color:#fff">0</div>
<div class="t" style="left:1515px;top:1px;height:22px;line-height:22px;font-size:12px;color:#fff">Ln 8, Col 8</div>
<div class="t" style="left:1587px;top:1px;height:22px;line-height:22px;font-size:12px;color:#fff">Spaces: 4</div>
<div class="t" style="left:1651px;top:1px;height:22px;line-height:22px;font-size:12px;color:#fff">UTF-8</div>
<div class="t" style="left:1699px;top:1px;height:22px;line-height:22px;font-size:12px;color:#fff">CRLF</div>
<div class="t" style="left:1741px;top:1px;height:22px;line-height:22px;font-size:12px;color:#fff">HTML</div>
<svg class="a" style="left:1789px;top:4px" width="14" height="15" fill="none" stroke="#fff" stroke-width="1.1"><circle cx="6.3" cy="6.2" r="1.4" fill="#fff" stroke="none"/><path d="M2.4 10 A5.4 5.4 0 1 1 10.2 10 M4.2 8.3 A3 3 0 1 1 8.4 8.3"/><path d="M6.3 7.5 V13.5" stroke-width="1.5"/></svg>
<div class="t" style="left:1805px;top:1px;height:22px;line-height:22px;font-size:12px;color:#fff">Go Live</div>
<svg class="a" style="left:1860px;top:4px" width="16" height="14" fill="none" stroke="#fff" stroke-width="1.1"><circle cx="6" cy="5" r="3"/><path d="M1 13 Q2 8.5 6 8.5 Q9 8.5 10 11 M8 1.5 H15 V7.5 H12 L10 9.5"/></svg>
<svg class="a" style="left:1892px;top:3px" width="16" height="16" fill="none" stroke="#fff" stroke-width="1.1"><path d="M3 12 H12 L11 10 V6.5 A3.5 3.5 0 0 0 4 6.5 V10 Z M6 13.5 H9"/><circle cx="12" cy="3.5" r="2.5" fill="#fff" stroke="none"/></svg>
</div>
<div id="taskbar" class="a">
<svg class="a" style="left:18px;top:6px" width="76" height="36">
<path d="M3 19.5 L8.5 14 L13 18.5" fill="none" stroke="#107c10" stroke-width="4"/>
<path d="M12 19 L19 12.5" fill="none" stroke="#4cbb17" stroke-width="4"/>
<rect x="20" y="11" width="4" height="9" fill="#5fd81f"/>
<circle cx="19.5" cy="7.5" r="7.6" fill="#c42b1c"/>
<text x="19.5" y="11.5" font-size="11" fill="#fff" text-anchor="middle" font-family="Liberation Sans">1</text>
</svg>
<div class="t" style="left:50px;top:9px;font-size:12px;line-height:15px;color:#1b1b1b;transform:scaleX(0.92);transform-origin:0 0">CABK</div>
<div class="t" style="left:50px;top:26px;font-size:12px;line-height:15px;color:#138a13;transform:scaleX(0.94);transform-origin:0 0">+1,53%</div>

<svg class="a" style="left:595px;top:13px" width="24" height="24"><rect x="0" y="0" width="11" height="11" fill="#1e9bee"/><rect x="12.5" y="0" width="11" height="11" fill="#2aa6f0"/><rect x="0" y="12.5" width="11" height="11" fill="#1180df"/><rect x="12.5" y="12.5" width="11" height="11" fill="#1788e4"/></svg>
<div class="a" style="left:632px;top:10px;width:219px;height:30px;border-radius:15px;background:#f1f4e3;border:1px solid #d5d9c4"></div>
<svg class="a" style="left:641px;top:17px" width="18" height="18" fill="none" stroke="#1b1b1b" stroke-width="1.8"><circle cx="7.5" cy="7.5" r="5.5"/><path d="M11.5 11.5 L16 16"/></svg>
<div class="t" style="left:668px;top:10px;height:30px;line-height:30px;font-size:14px;color:#5d5d5d">Búsqueda</div>

<svg class="a" style="left:862px;top:12px" width="26" height="26"><rect x="1" y="8" width="17" height="16" fill="#202020"/><rect x="7" y="1" width="18" height="17" fill="#f2f2f2"/><rect x="7" y="8" width="11" height="10" fill="#a9a9a9"/></svg>
<svg class="a" style="left:905px;top:11px" width="26" height="26"><circle cx="10" cy="4.5" r="3.5" fill="#7b83eb"/><circle cx="19.5" cy="7" r="3" fill="#7b83eb"/><rect x="14" y="11" width="11" height="12" rx="4" fill="#5059c9"/><rect x="5" y="9" width="13" height="14" rx="4" fill="#7b83eb"/><rect x="1" y="12" width="10" height="10" rx="2" fill="#4b53bc"/><text x="6" y="20.5" font-size="8" font-weight="bold" fill="#fff" text-anchor="middle" font-family="Liberation Sans">T</text></svg>
<svg class="a" style="left:950px;top:13px" width="26" height="24"><path d="M1 1.5 H9 L11 3.5 H25 V22 H1 Z" fill="#e8ae1d"/><rect x="1" y="4.5" width="24" height="17.5" fill="#ffd152"/><rect x="6" y="15" width="14" height="6" rx="1.5" fill="#1b76d2"/></svg>
<svg class="a" style="left:994px;top:11px" width="26" height="26"><defs><linearGradient id="eg" x1="0" y1="0" x2="1" y2="0.6"><stop offset="0" stop-color="#2aa9e8"/><stop offset="0.6" stop-color="#2fc3b0"/><stop offset="1" stop-color="#6ad85a"/></linearGradient></defs>
<path d="M1.5 13.5 A11.8 11.8 0 0 1 25 12 Q25 17.5 19 18 Q14.5 18.3 13.5 15.5 Q16 13.5 15 11 Q13.5 8 10 8.5 Q4 9.5 1.5 13.5 Z" fill="url(#eg)"/>
<path d="M1.5 13.5 Q4 9.5 10 8.5 Q6.5 11 7.5 15.5 Q9 21.5 15.5 21.5 Q19.5 21.5 22.5 19.5 Q19 24.5 12 24.5 Q1.5 24 1.5 13.5Z" fill="#1877d2"/>
<rect x="1" y="17" width="12" height="7.5" fill="#c46d12"/><rect x="1" y="17" width="12" height="3.5" fill="#f09a22"/><rect x="6" y="19.5" width="2" height="1.6" fill="#f5cf3a"/>
</svg>
<svg class="a" style="left:1038px;top:12px" width="26" height="26"><defs><linearGradient id="sg" x1="0" y1="0" x2="1" y2="1"><stop offset="0" stop-color="#1a63b8"/><stop offset="1" stop-color="#1e3f78"/></linearGradient></defs><path d="M6.5 8 V4 Q6.5 2.2 8.3 2.2 H15.7 Q17.5 2.2 17.5 4 V8" fill="none" stroke="#2cb6f2" stroke-width="1.8"/><path d="M1.5 7.5 Q1.5 6.5 2.5 6.5 H21.5 Q22.5 6.5 22.5 7.5 V21 Q22.5 23.8 19.5 23.8 H4.5 Q1.5 23.8 1.5 21 Z" fill="url(#sg)"/><rect x="7.3" y="10" width="4" height="4" fill="#f25022"/><rect x="12.3" y="10" width="4" height="4" fill="#7fba00"/><rect x="7.3" y="15" width="4" height="4" fill="#00a4ef"/><rect x="12.3" y="15" width="4" height="4" fill="#ffb900"/></svg>
<svg class="a" style="left:1082px;top:12px" width="26" height="26"><circle cx="13" cy="13" r="12" fill="#fbc116"/><path d="M13 1 A12 12 0 0 1 23.4 7 H13 A6 6 0 0 0 7.8 10 L2.6 7 A12 12 0 0 1 13 1 Z" fill="#e33b2e"/><path d="M2.6 7 L7.8 16 A6 6 0 0 0 13 19 L7.8 24.4 A12 12 0 0 1 2.6 7 Z" fill="#199d4f"/><circle cx="13" cy="13" r="5.3" fill="#fff"/><circle cx="13" cy="13" r="4.3" fill="#3a7de9"/></svg>
<svg class="a" style="left:1126px;top:11px" width="26" height="26"><rect x="1" y="2" width="14" height="21" fill="#3a9be8"/><rect x="3" y="4" width="4" height="17" fill="#8ccff7"/><rect x="9" y="4" width="4" height="17" fill="#6bb8f0"/><circle cx="17.5" cy="11" r="6.5" fill="#d9d9d9"/><circle cx="17.5" cy="11" r="1.8" fill="#6bb8f0"/></svg>
<svg class="a" style="left:1170px;top:12px" width="26" height="26"><rect x="7" y="1" width="18" height="23" rx="1.5" fill="#185abd"/><rect x="7" y="1" width="18" height="6" fill="#41a5ee"/><rect x="7" y="7" width="18" height="6" fill="#2b7cd3"/><rect x="1" y="6" width="13" height="13" rx="1.5" fill="#0e4ba8"/><text x="7.5" y="16.5" font-size="10" font-weight="bold" fill="#fff" text-anchor="middle" font-family="Liberation Sans">W</text></svg>
<div class="a" style="left:1208px;top:5px;width:38px;height:38px;border-radius:5px;background:rgba(255,255,255,0.55)"></div>
<svg class="a" style="left:1215px;top:13px" width="24" height="24"><path d="M3 3 L12 5 L20 2 L23 5 L20 7 V22 H5 V7 Z" fill="#e8b560"/><path d="M2 10 H12 V7 L19 12 L12 17 V14 H2 Z" fill="#3fae7e"/></svg>
<div class="a" style="left:1221px;top:40px;width:12px;height:3px;border-radius:2px;background:#0f6cbd"></div>
<svg class="a" style="left:1255px;top:9px" width="32" height="30" viewBox="0 0 24 23"><path d="M5.2 7.8 L16.5 17.6 M5.2 14.2 L16.5 4.6" stroke="#1f84d0" stroke-width="2.7" stroke-linecap="round" fill="none"/><path d="M15.8 3 L20 5.2 V17.2 L15.8 19.4 Z" fill="#3ba6f0"/></svg>
<svg class="a" style="left:1300px;top:16px" width="28" height="30"><rect x="2.5" y="2.5" width="18.5" height="15" rx="2" fill="#f4f4f4"/><path d="M5.5 14 V6.5 Q5.5 5.5 6.5 5.5 H17.5" fill="none" stroke="#d83b2b" stroke-width="2.6" stroke-dasharray="2.6 1.4"/><path d="M17 7 L18.5 23 M6 17 Q12 18 18 20" fill="none" stroke="#9a9a9a" stroke-width="2"/><circle cx="25" cy="16" r="2.2" fill="none" stroke="#1e88e5" stroke-width="1.4"/><circle cx="17" cy="25" r="2.2" fill="none" stroke="#1e88e5" stroke-width="1.4"/><path d="M18.5 19 L23.5 16.8" stroke="#1e88e5" stroke-width="1.4"/></svg>
<div class="a" style="left:959px;top:40px;width:6px;height:3px;border-radius:2px;background:#858585"></div>
<div class="a" style="left:1092px;top:40px;width:6px;height:3px;border-radius:2px;background:#858585"></div>
<div class="a" style="left:1136px;top:40px;width:6px;height:3px;border-radius:2px;background:#858585"></div>
<div class="a" style="left:1180px;top:40px;width:6px;height:3px;border-radius:2px;background:#858585"></div>
<div class="a" style="left:1268px;top:40px;width:6px;height:3px;border-radius:2px;background:#858585"></div>
<div class="a" style="left:1312px;top:40px;width:6px;height:3px;border-radius:2px;background:#858585"></div>

<svg class="a" style="left:1718px;top:15px" width="110" height="18" fill="none" stroke="#1b1b1b" stroke-width="1.2">
<path d="M3 11 L8 6 L13 11"/>
<path d="M33 13 H45 A3.5 3.5 0 0 0 45 6 A5 5 0 0 0 36 5 A4 4 0 0 0 33 13 Z M32 3 L46 16"/>
<path d="M65 4 H76 V13 H65 Z M68 16 H73 M70.5 13 V16"/><rect x="75" y="2" width="3.5" height="6" fill="#e1e1d6"/>
<path d="M89 7 H92 L96 3.5 V14.5 L92 11 H89 Z"/><path d="M98.5 6 L104 11.5 M104 6 L98.5 11.5" stroke-width="1"/>
</svg>
<div class="t" style="left:1839px;top:9px;width:62px;text-align:right;font-size:12px;line-height:15px;color:#1b1b1b">9:14</div>
<div class="t" style="left:1835px;top:25px;width:66px;text-align:right;font-size:12px;line-height:15px;color:#1b1b1b">18/12/2025</div>
</div>
<div id="dialog" class="a" style="left:692px;top:320px;width:502px;height:420px;border-radius:8px;overflow:hidden;background:#f0f0f0;border:1px solid #8e8e8e;box-shadow:0 24px 56px rgba(0,0,0,0.33),0 2px 14px rgba(0,0,0,0.14)">
<div class="a" style="left:0;top:0;width:500px;height:25px;background:linear-gradient(90deg,#f2f5e4 0%,#edf5e6 30%,#e6f4f2 55%,#e9f1f7 75%,#ecf2f8 100%)"></div>
<svg class="a" style="left:4px;top:6px" width="15" height="14"><path d="M2.5 1.5 L6.5 2.5 L11.5 0.8 L14 2.8 L12.8 3.8 V13 H4 V4 Z" fill="#eab366"/><path d="M0.5 4.8 H6 V2 L10.8 6.6 L6 11.2 V8.5 H0.5 Z" fill="#3fae7e"/></svg>
<div class="t" style="left:24px;top:0;height:25px;line-height:26px;font-size:12px;color:#1b1b1b">Setup</div>
<svg class="a" style="left:370px;top:5px" width="120" height="14" fill="none" stroke-width="1">
<path d="M11 7.5 H22" stroke="#1b1b1b" stroke-width="1.1"/>
<rect x="56.5" y="2.5" width="9" height="9" rx="1" stroke="#c2c2c2"/>
<path d="M102 2 L112 12 M112 2 L102 12" stroke="#1b1b1b" stroke-width="1.1"/>
</svg>
<div class="a" style="left:0;top:25px;width:500px;height:59px;background:#fff;border-bottom:1px solid #a0a0a0"></div>
<div class="t" style="left:13px;top:25px;height:59px;line-height:59px;font-size:12px;font-weight:bold;color:#000;transform:scaleX(0.94);transform-origin:0 0">Language</div>
<svg class="a" style="left:450px;top:35px" width="39" height="39" viewBox="0 0 39 39">
<defs><radialGradient id="lg" cx="50%" cy="50%" r="60%"><stop offset="70%" stop-color="#f77b22"/><stop offset="100%" stop-color="#c9561a"/></radialGradient></defs>
<rect x="0.3" y="0" width="37.5" height="37.5" rx="4" fill="url(#lg)"/>
<path d="M4 3 Q19 1.5 34 3 Q33 5.5 30 5.5 H8 Q5 5.5 4 3Z" fill="#fba874" opacity="0.8"/>
<g fill="#fff"><circle cx="12" cy="14.4" r="7.1"/><circle cx="26" cy="14.4" r="7.1"/><circle cx="12" cy="23.8" r="7.1"/><circle cx="26" cy="23.8" r="7.1"/><rect x="12" y="14" width="14" height="10"/></g>
<circle cx="12" cy="14.4" r="2.5" fill="#f26f10"/>
<path d="M12 23.8 V22.5 Q12 19 16 19 H26 M26 14.4 V23.8" fill="none" stroke="#f57a1f" stroke-width="4.6" stroke-linecap="round"/>
</svg>
<div class="t" style="left:12px;top:101px;height:18px;line-height:18px;font-size:12px;color:#000">XAMPP Control Panel for Windows supports different languages.</div>
<div class="t" style="left:12px;top:141px;height:18px;line-height:18px;font-size:12px;color:#000">Language</div>
<div class="a" style="left:71px;top:139px;width:203px;height:21px;background:#fff;border:1px solid #7a7a7a;border-radius:2px"></div>
<div class="t" style="left:77px;top:141px;height:19px;line-height:19px;font-size:12px;color:#000">English</div>
<svg class="a" style="left:258px;top:145px" width="12" height="8"><path d="M1.5 1.5 L6 6 L10.5 1.5" fill="none" stroke="#606060" stroke-width="1"/></svg>
<div class="t" style="left:5px;top:361px;height:18px;line-height:18px;font-size:12px;color:#a3a3a3">VMware InstallBuilder</div>
<div class="a" style="left:124px;top:369px;width:376px;height:1px;background:#a0a0a0"></div>
<div class="a" style="left:124px;top:370px;width:376px;height:1px;background:#fff"></div>
<div class="a" style="left:258px;top:387px;width:74px;height:23px;background:#fdfdfd;border:1px solid #d0d0d0;border-radius:4px"></div>
<div class="t" style="left:258px;top:388px;width:74px;height:23px;line-height:23px;text-align:center;font-size:12px;color:#000">&lt; Back</div>
<div class="a" style="left:339px;top:387px;width:73px;height:23px;background:#fdfdfd;border:1px solid #d0d0d0;border-radius:4px"></div>
<div class="a" style="left:341px;top:389px;width:69px;height:19px;border:1px dotted #000"></div>
<div class="t" style="left:339px;top:388px;width:73px;height:23px;line-height:23px;text-align:center;font-size:12px;color:#000">Next &gt;</div>
<div class="a" style="left:418px;top:387px;width:74px;height:23px;background:#fdfdfd;border:1px solid #d0d0d0;border-radius:4px"></div>
<div class="t" style="left:418px;top:388px;width:74px;height:23px;line-height:23px;text-align:center;font-size:12px;color:#000">Cancel</div>
</div>
<div id="toast" class="a" style="left:1459px;top:892px;width:450px;height:106px;background:#f3f3f3;box-shadow:0 0 8px 2px rgba(0,0,0,0.16)">
<svg class="a" style="left:9px;top:12px" width="18" height="18"><circle cx="9" cy="9" r="7.5" fill="none" stroke="#1a85ff" stroke-width="1.2"/><circle cx="9" cy="5.3" r="0.9" fill="#1a85ff"/><path d="M9 7.5 V13" stroke="#1a85ff" stroke-width="1.4"/></svg>
<div class="t" style="left:31px;top:11px;height:22px;line-height:22px;font-size:13px;color:#616161">You have Docker installed on your system. Do you want to</div>
<div class="t" style="left:31px;top:33px;height:22px;line-height:22px;font-size:13px;color:#616161">install the recommended extensions for it?</div>
<svg class="a" style="left:395px;top:13px" width="18" height="18" viewBox="0 0 24 24"><path fill="#424242" fill-rule="evenodd" d="M10.3 1.5h3.4l.5 2.6 1.7.7 2.2-1.5 2.4 2.4-1.5 2.2.7 1.7 2.6.5v3.4l-2.6.5-.7 1.7 1.5 2.2-2.4 2.4-2.2-1.5-1.7.7-.5 2.6h-3.4l-.5-2.6-1.7-.7-2.2 1.5-2.4-2.4 1.5-2.2-.7-1.7-2.6-.5v-3.4l2.6-.5.7-1.7-1.5-2.2 2.4-2.4 2.2 1.5 1.7-.7zM12 8.5a3.5 3.5 0 100 7 3.5 3.5 0 000-7zM11.4 3 l-.4 2.2-2.7 1.1-1.9-1.3-1 1 1.3 1.9-1.1 2.7-2.2.4v1.4l2.2.4 1.1 2.7-1.3 1.9 1 1 1.9-1.3 2.7 1.1.4 2.2h1.4l.4-2.2 2.7-1.1 1.9 1.3 1-1-1.3-1.9 1.1-2.7 2.2-.4v-1.4l-2.2-.4-1.1-2.7 1.3-1.9-1-1-1.9 1.3-2.7-1.1-.4-2.2zM12 10a2 2 0 110 4 2 2 0 010-4z"/></svg>
<svg class="a" style="left:424px;top:15px" width="12" height="12"><path d="M1.5 1.5 L10.5 10.5 M10.5 1.5 L1.5 10.5" stroke="#424242" stroke-width="1.2"/></svg>
<div class="a" style="left:228px;top:64px;width:51px;height:28px;background:#007acc;border-radius:2px"></div>
<div class="t" style="left:228px;top:64px;width:51px;height:28px;line-height:28px;text-align:center;font-size:13px;color:#fff">Install</div>
<div class="a" style="left:289px;top:64px;width:151px;height:28px;background:#5f6a79;border-radius:2px"></div>
<div class="t" style="left:289px;top:64px;width:151px;height:28px;line-height:28px;text-align:center;font-size:13px;color:#fff;letter-spacing:-0.35px">Show Recommendations</div>
</div>
</body></html>
